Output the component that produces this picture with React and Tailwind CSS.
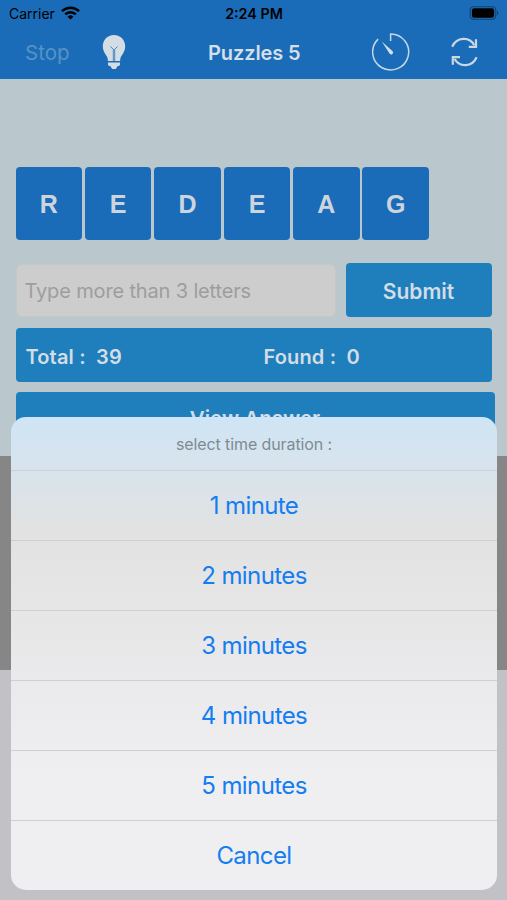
const LETTERS = ["R", "E", "D", "E", "A", "G"];

const DURATIONS = ["1 minute", "2 minutes", "3 minutes", "4 minutes", "5 minutes"];

export default function App() {
  return (
    <div className="relative flex h-[900px] w-[507px] flex-col overflow-hidden bg-[#c1c1c6] font-['Inter',sans-serif]">
      <header className="h-[79px] shrink-0 bg-[#1b6cb8]">
        <StatusBar />
        <NavBar />
      </header>

      <main className="h-[377px] shrink-0 bg-[#bac7cd] pl-[15.500px] pt-[88px]">
        <div className="flex gap-[2.8px]">
          {LETTERS.map((letter, i) => (
            <LetterTile key={i} letter={letter} />
          ))}
        </div>

        <div className="mt-[23px] flex items-center gap-[10px]">
          <input
            type="text"
            placeholder="Type more than 3 letters"
            className="h-[53px] w-[320px] rounded-[6px] border border-[#c3c9ca] bg-[#cdcdcd] px-2 pt-[2px] text-[20px] tracking-[-0.15px] text-[#555] outline-none placeholder:text-[#9d9d9e]"
          />
          <button className="h-[54px] w-[146px] rounded-[4px] bg-[#1f7fbc] pt-[3px] text-[21px] font-semibold text-[#d3dde5]">
            Submit
          </button>
        </div>

        <div className="mt-[11px] flex h-[54px] w-[476px] items-center rounded-[4px] bg-[#1f7fbc] pl-[10px] pt-[3px] text-[20px] font-semibold text-[#d3dde5]">
          <span className="w-[238px] whitespace-pre tracking-[0.15px]">Total :  39</span>
          <span className="whitespace-pre tracking-[0.15px]">Found :  0</span>
        </div>

        <button className="mt-[10px] h-[54px] w-[479px] rounded-[4px] bg-[#1f7fbc] text-[20.500px] font-semibold text-[#d3dde5]">
          View Answer
        </button>
      </main>

      {/* Dimmed ad area below the game board */}
      <div className="h-[214px] shrink-0 bg-[#868686]" />

      <ActionSheet />
    </div>
  );
}

function StatusBar() {
  return (
    <div className="grid h-[26px] grid-cols-3 items-center pl-[9px] pr-[8px] text-black">
      <div className="flex items-center gap-[6px]">
        <span className="pt-px text-[14px]">Carrier</span>
        <WifiIcon />
      </div>
      <span className="pt-px text-center text-[14.300px] font-semibold">2:24 PM</span>
      <div className="flex justify-end">
        <BatteryIcon />
      </div>
    </div>
  );
}

function NavBar() {
  return (
    <div className="flex h-[52px] items-center">
      <span className="ml-[25px] w-[77px] pt-[2px] text-[20.500px] text-[#5692c6]">Stop</span>
      <BulbIcon />
      <h1 className="ml-[82px] w-[92px] whitespace-nowrap pt-px text-[20px] font-semibold tracking-[-0.1px] text-[#d5dfe8]">
        Puzzles 5
      </h1>
      <TimerIcon />
      <RefreshIcon />
    </div>
  );
}

function LetterTile({ letter }) {
  return (
    <div className="flex h-[73px] w-[66.600px] items-center justify-center rounded-[4px] bg-[#1b6cb8] pt-[2px] font-['Liberation_Sans',sans-serif] text-[25px] font-bold text-[#ccd5de]">
      {letter}
    </div>
  );
}

function ActionSheet() {
  return (
    <div className="absolute left-[11px] top-[417px] flex h-[473px] w-[486px] flex-col divide-y divide-[#cbd0d2] overflow-hidden rounded-[15px] bg-linear-to-b from-[#cfe5f5] from-0% via-[#e2e2e2] via-24% to-[#efeff2] to-75%">
      <p className="flex h-[54px] shrink-0 items-center justify-center text-[16px] tracking-[-0.1px] text-[#7f8b92]">
        select time duration :
      </p>
      {DURATIONS.map((label) => (
        <SheetButton key={label}>{label}</SheetButton>
      ))}
      <SheetButton>Cancel</SheetButton>
    </div>
  );
}

function SheetButton({ children }) {
  return (
    <button className="h-[70px] shrink-0 text-[24px] tracking-[-0.6px] text-[#147df0]">
      {children}
    </button>
  );
}

function WifiIcon() {
  return (
    <svg width="19" height="14" viewBox="0 0 19 14" fill="none" stroke="currentColor" strokeWidth="2.5">
      <path d="M1 5.1a12.2 12.2 0 0 1 17 0" />
      <path d="M4.2 8.4a7.6 7.6 0 0 1 10.6 0" />
      <path d="M9.5 13.6 6.6 10.7a4.2 4.2 0 0 1 5.8 0z" fill="currentColor" stroke="none" />
    </svg>
  );
}

function BatteryIcon() {
  return (
    <svg width="30" height="14" viewBox="0 0 30 14">
      <rect x="1.2" y="0.7" width="25.6" height="12.6" rx="3.6" fill="none" stroke="#0f4270" strokeWidth="1.1" />
      <rect x="2.9" y="2.3" width="22.2" height="9.4" rx="2.2" fill="#000" />
      <path d="M28 4.8c1.8.7 1.8 3.7 0 4.4z" fill="#0f4270" />
    </svg>
  );
}

function BulbIcon() {
  return (
    <svg width="24" height="34" viewBox="0 0 24 34">
      <path
        d="M12 0C5.3 0 .8 5.1.8 11.300c0 4.200 1.900 6.900 3.600 9.500 1 1.500 1.500 2.900 1.500 5.200h12.200c0-2.300.5-3.700 1.500-5.200 1.700-2.600 3.600-5.300 3.600-9.500C23.200 5.100 18.700 0 12 0z"
        fill="#d5dde4"
      />
      <path d="M8.400 11.400 11.300 14.400V26M15.600 11.400 12.700 14.400V26M11.300 14.400h1.400" fill="none" stroke="#4c89be" strokeWidth="1" />
      <path d="M6 27.500h12v2c0 .9-.6 1.400-1.500 1.400h-.8L13.800 34h-3.600l-1.900-3.100h-.8C6.600 30.900 6 30.400 6 29.500z" fill="#d5dde4" />
    </svg>
  );
}

function TimerIcon() {
  return (
    <svg className="ml-[72px]" width="38" height="38" viewBox="0 0 38 38">
      <path d="M18.600 8V1a18 18 0 1 1-12.500 5.100" fill="none" stroke="#c5d6e5" strokeWidth="1.500" />
      <path d="M9.800 8.600 20.600 18.200a1.900 1.900 0 0 1-2.900 2.500z" fill="#d5dfe8" />
    </svg>
  );
}

function RefreshIcon() {
  return (
    <svg className="ml-[40px]" width="28" height="30" viewBox="0 0 28 30" fill="none" stroke="#c9d8e4" strokeWidth="2.200">
      <path d="M2.200 9.800C6.500-.2 19.500-.8 24.300 8.200" />
      <path d="M26 2.300v7.600h-7.200" />
      <path d="M26.600 20.200C22.300 30.200 9.300 30.800 4.500 21.800" />
      <path d="M2.800 27.700v-7.600h7.200" />
    </svg>
  );
}
